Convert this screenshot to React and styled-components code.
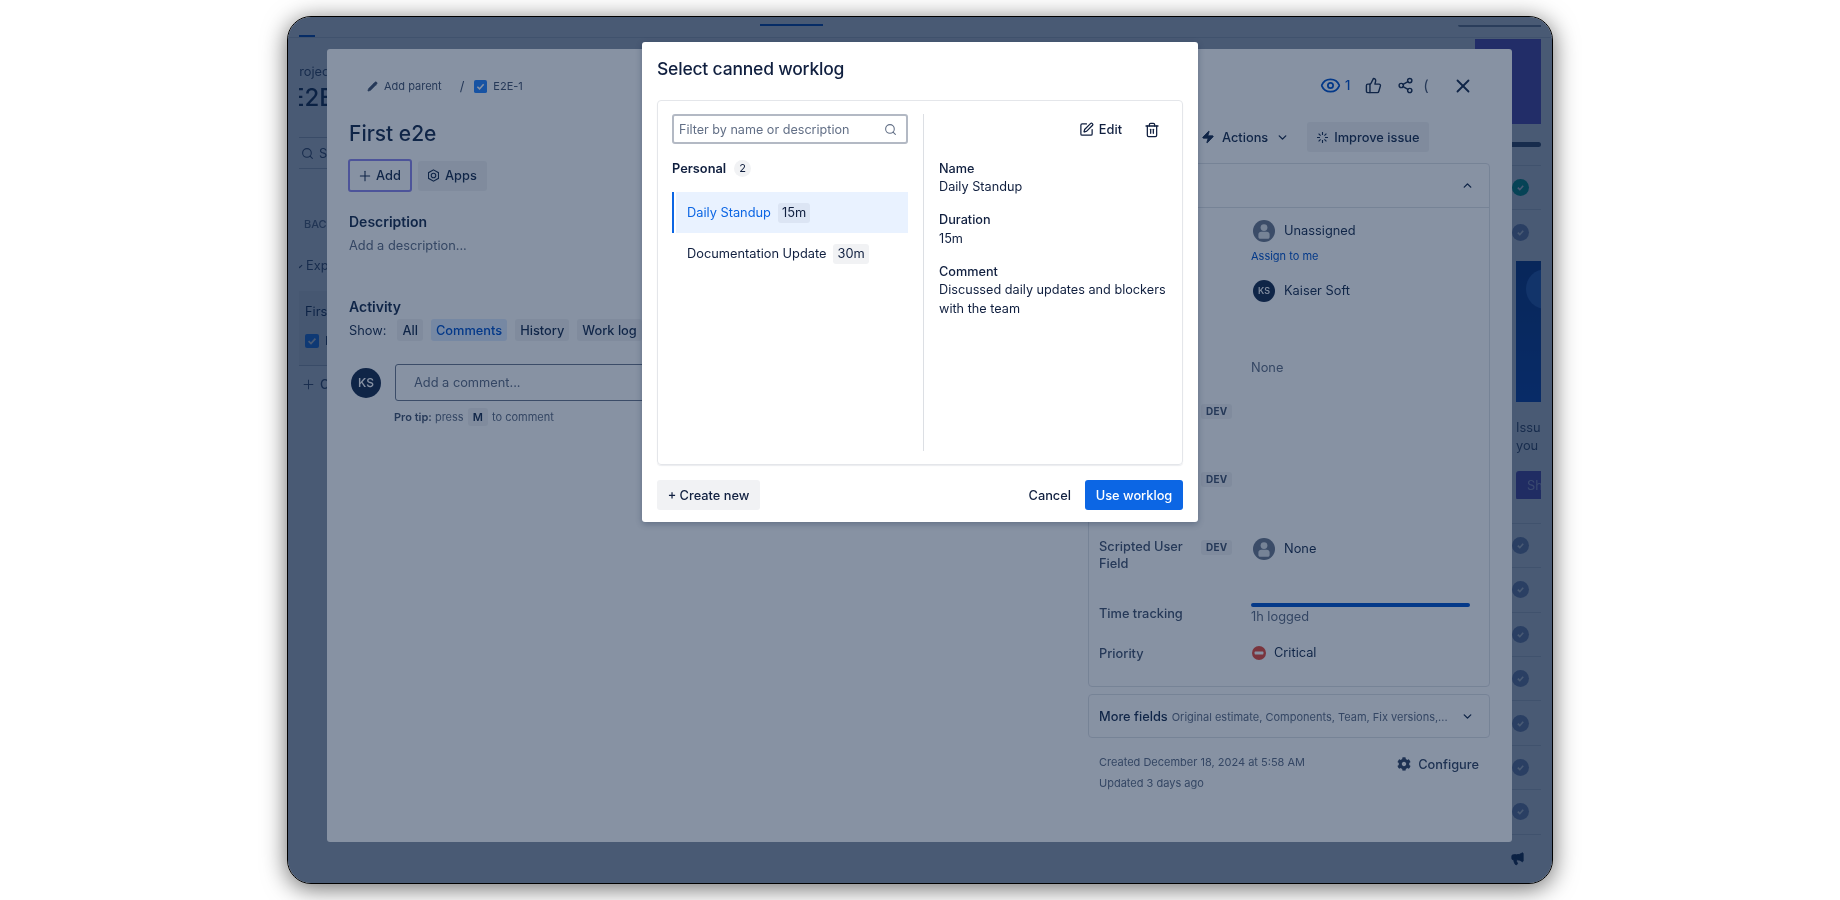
import React from "react";
import styled, { createGlobalStyle } from "styled-components";
import { FaCog } from "react-icons/fa";
import {
  ChevronDown,
  ChevronUp,
  Eye,
  Megaphone,
  Pencil,
  Plus,
  Search,
  Share2,
  SquarePen,
  ThumbsUp,
  Trash2,
  X,
  Zap,
} from "lucide-react";

const GlobalStyle = createGlobalStyle`
  html, body {
    margin: 0;
    background: #fff;
  }
  body {
    font-family: Inter, "Noto Sans", sans-serif;
    color: #172b4d;
  }
  * {
    box-sizing: border-box;
  }
`;

const CHECK_ROWS_TOP = [1, 2];
const CHECK_ROWS_BOTTOM = [1, 2, 3, 4, 5, 6, 7];

function App() {
  return (
    <Page>
      <GlobalStyle />
      <Frame>
        <TopBar>
          <TabDash />
          <NavUnderline />
          <SearchLine />
        </TopBar>
        <Board>
          <LeftRail>
            <Crumb>Projects</Crumb>
            <ProjectName>E2E</ProjectName>
            <RailSearch>
              <Search size={13} strokeWidth={2} />
              <span>Search</span>
            </RailSearch>
            <SectionLabel>BACKLOG</SectionLabel>
            <Expander>
              <ChevronDown size={9} strokeWidth={3} />
              <span>Expand</span>
            </Expander>
            <BoardCard>
              <CardTitle>First e2e</CardTitle>
              <CardKey>
                <TaskCheck size={14} />
                <span>E2E-1</span>
              </CardKey>
            </BoardCard>
            <CreateIssue>
              <Plus size={15} strokeWidth={1.5} />
              <span>Create</span>
            </CreateIssue>
          </LeftRail>
          <RightRail>
            <Banner />
            <RailBar />
            {CHECK_ROWS_TOP.map((n) => (
              <CheckRow key={n}>
                <CheckDot $done={n === 1}>
                  <CheckMark />
                </CheckDot>
              </CheckRow>
            ))}
            <Promo>
              <PromoArt>
                <PromoBlob />
              </PromoArt>
              <PromoText>Issues you</PromoText>
              <PromoButton>Show</PromoButton>
            </Promo>
            {CHECK_ROWS_BOTTOM.map((n) => (
              <CheckRow key={n}>
                <CheckDot>
                  <CheckMark />
                </CheckDot>
              </CheckRow>
            ))}
            <Feedback>
              <Megaphone size={15} fill="currentColor" strokeWidth={1.5} />
            </Feedback>
          </RightRail>
        </Board>
        <Scrim />
        <IssuePanel>
          <MainColumn>
            <Breadcrumbs>
              <Pencil size={11} fill="currentColor" strokeWidth={1.5} />
              <span>Add parent</span>
              <Slash>/</Slash>
              <TaskCheck size={13} />
              <span>E2E-1</span>
            </Breadcrumbs>
            <IssueTitle>First e2e</IssueTitle>
            <ButtonRow>
              <GhostButton $focused>
                <Plus size={16} strokeWidth={1.6} />
                Add
              </GhostButton>
              <GhostButton>
                <AppsIcon />
                Apps
              </GhostButton>
            </ButtonRow>
            <SectionTitle>Description</SectionTitle>
            <Placeholder>Add a description...</Placeholder>
            <ActivityTitle>Activity</ActivityTitle>
            <FilterRow>
              <span>Show:</span>
              <FilterChip>All</FilterChip>
              <FilterChip $active>Comments</FilterChip>
              <FilterChip>History</FilterChip>
              <FilterChip>Work log</FilterChip>
            </FilterRow>
            <CommentRow>
              <Avatar $size={30} $font={12}>KS</Avatar>
              <CommentBox>Add a comment...</CommentBox>
            </CommentRow>
            <ProTip>
              <strong>Pro tip:</strong> press <Kbd>M</Kbd> to comment
            </ProTip>
          </MainColumn>
          <SideColumn>
            <TopIcons>
              <WatchCount>
                <Eye size={21} strokeWidth={2} />
                <span>1</span>
              </WatchCount>
              <ThumbsUp size={17} strokeWidth={2} />
              <Share2 size={17} strokeWidth={2} />
              <ClippedParen>(</ClippedParen>
              <CloseIcon>
                <X size={22} strokeWidth={2} />
              </CloseIcon>
            </TopIcons>
            <ActionRow>
              <ActionsButton>
                <Zap size={14} fill="currentColor" strokeWidth={1.5} />
                <span>Actions</span>
                <ChevronDown size={13} strokeWidth={2.6} />
              </ActionsButton>
              <ImproveButton>
                <SparkIcon />
                Improve issue
              </ImproveButton>
            </ActionRow>
            <DetailsCard>
              <DetailsHeader>
                <ChevronUp size={13} strokeWidth={2.6} />
              </DetailsHeader>
              <FieldList>
                <FieldRow $h={60}>
                  <FieldLabel />
                  <FieldBadge />
                  <FieldValue>
                    <PersonLine>
                      <PersonIcon />
                      Unassigned
                    </PersonLine>
                    <AssignLink>Assign to me</AssignLink>
                  </FieldValue>
                </FieldRow>
                <FieldRow $h={77}>
                  <FieldLabel />
                  <FieldBadge />
                  <FieldValue>
                    <PersonLine>
                      <Avatar $size={22} $font={9}>KS</Avatar>
                      Kaiser Soft
                    </PersonLine>
                  </FieldValue>
                </FieldRow>
                <FieldRow $h={43}>
                  <FieldLabel />
                  <FieldBadge />
                  <MutedValue>None</MutedValue>
                </FieldRow>
                <FieldRow $h={68}>
                  <FieldLabel />
                  <FieldBadge>
                    <DevTag>DEV</DevTag>
                  </FieldBadge>
                  <FieldValue />
                </FieldRow>
                <FieldRow $h={68}>
                  <FieldLabel />
                  <FieldBadge>
                    <DevTag>DEV</DevTag>
                  </FieldBadge>
                  <FieldValue />
                </FieldRow>
                <FieldRow $h={67}>
                  <FieldLabel>Scripted User Field</FieldLabel>
                  <FieldBadge>
                    <DevTag>DEV</DevTag>
                  </FieldBadge>
                  <ScriptedValue>
                    <PersonLine>
                      <PersonIcon />
                      None
                    </PersonLine>
                  </ScriptedValue>
                </FieldRow>
                <FieldRow $h={40}>
                  <FieldLabel>Time tracking</FieldLabel>
                  <FieldBadge />
                  <FieldValue>
                    <TimeBar />
                    <TimeText>1h logged</TimeText>
                  </FieldValue>
                </FieldRow>
                <FieldRow $h={44}>
                  <FieldLabel>Priority</FieldLabel>
                  <FieldBadge />
                  <PriorityValue>
                    <CriticalIcon />
                    Critical
                  </PriorityValue>
                </FieldRow>
              </FieldList>
            </DetailsCard>
            <MoreFields>
              <MoreText>
                <strong>More fields</strong>
                <small>Original estimate, Components, Team, Fix versions,...</small>
              </MoreText>
              <ChevronDown size={13} strokeWidth={2.6} />
            </MoreFields>
            <MetaRow>
              <MetaDates>
                <span>Created December 18, 2024 at 5:58 AM</span>
                <span>Updated 3 days ago</span>
              </MetaDates>
              <ConfigureLink>
                <FaCog size={14} />
                Configure
              </ConfigureLink>
            </MetaRow>
          </SideColumn>
        </IssuePanel>
        <Scrim />
        <Modal>
          <ModalTitle>Select canned worklog</ModalTitle>
          <PickerBox>
            <PickerList>
              <FilterInput>
                <span>Filter by name or description</span>
                <Search size={13} strokeWidth={2} />
              </FilterInput>
              <GroupHeading>
                Personal
                <CountPill>2</CountPill>
              </GroupHeading>
              <WorklogRow $selected>
                Daily Standup
                <DurationChip>15m</DurationChip>
              </WorklogRow>
              <WorklogRow>
                Documentation Update
                <DurationChip>30m</DurationChip>
              </WorklogRow>
            </PickerList>
            <PickerDetail>
              <DetailActions>
                <EditAction>
                  <SquarePen size={15} strokeWidth={2} />
                  Edit
                </EditAction>
                <Trash2 size={16} strokeWidth={1.9} />
              </DetailActions>
              <DetailField>
                <strong>Name</strong>
                <span>Daily Standup</span>
              </DetailField>
              <DetailField>
                <strong>Duration</strong>
                <span>15m</span>
              </DetailField>
              <DetailField>
                <strong>Comment</strong>
                <span>Discussed daily updates and blockers with the team</span>
              </DetailField>
            </PickerDetail>
          </PickerBox>
          <ModalFooter>
            <CreateButton>+ Create new</CreateButton>
            <FooterActions>
              <CancelButton>Cancel</CancelButton>
              <PrimaryButton>Use worklog</PrimaryButton>
            </FooterActions>
          </ModalFooter>
        </Modal>
      </Frame>
    </Page>
  );
}

function TaskCheck({ size }) {
  return (
    <svg width={size} height={size} viewBox="0 0 14 14">
      <rect width="14" height="14" rx="2" fill="#2684ff" />
      <path d="M3.6 7.2l2.4 2.4 4.4-5" fill="none" stroke="#fff" strokeWidth="1.7" />
    </svg>
  );
}

function CheckMark() {
  return (
    <svg width="9" height="9" viewBox="0 0 10 10">
      <path d="M2 5.2l2.2 2.2L8 3" fill="none" stroke="#fff" strokeWidth="1.8" />
    </svg>
  );
}

function AppsIcon() {
  return (
    <svg width="13" height="13" viewBox="0 0 12 12" fill="none" stroke="currentColor">
      <path d="M6 .8l4.6 2.6v5.2L6 11.2 1.4 8.6V3.4z" strokeWidth="1" />
      <circle cx="6" cy="6" r="2.1" strokeWidth="1" />
    </svg>
  );
}

function SparkIcon() {
  return (
    <svg width="13" height="13" viewBox="0 0 13 13" stroke="currentColor" strokeWidth="1.1">
      <path d="M6.5 1v3M6.5 9v3M1 6.5h3M9 6.5h3M2.6 2.6l2 2M8.4 8.4l2 2M10.4 2.6l-2 2M4.6 8.4l-2 2" />
    </svg>
  );
}

function PersonIcon() {
  return (
    <svg width="22" height="22" viewBox="0 0 22 22">
      <circle cx="11" cy="11" r="11" fill="#6b778c" />
      <circle cx="11" cy="7.6" r="3.4" fill="#dfe1e6" />
      <path d="M5.4 14.4c0-1.6 1.2-2.6 2.8-2.6h5.6c1.6 0 2.8 1 2.8 2.6V17c0 1-.8 1.8-1.8 1.8H7.2c-1 0-1.8-.8-1.8-1.8z" fill="#dfe1e6" />
    </svg>
  );
}

function CriticalIcon() {
  return (
    <svg width="14" height="14" viewBox="0 0 14 14">
      <circle cx="7" cy="7" r="7" fill="#e5493a" />
      <rect x="2.6" y="5.6" width="8.8" height="2.8" rx=".6" fill="#fff" />
    </svg>
  );
}

const Page = styled.div`
  min-height: 900px;
  padding-top: 16px;
  display: flex;
  justify-content: center;
  align-items: flex-start;
  overflow: hidden;
`;

const Frame = styled.div`
  position: relative;
  width: 1266px;
  height: 868px;
  display: flex;
  flex-direction: column;
  background: #fff;
  border: 1.5px solid #000;
  border-radius: 24px;
  overflow: hidden;
  box-shadow: 0 4px 24px rgba(0, 0, 0, 0.6);
  filter: blur(0.4px);
`;

/* the overlay that dims everything under a dialog */
const Scrim = styled.div`
  position: absolute;
  inset: 0;
  background: rgba(9, 30, 66, 0.485);
`;

/* --- page under the dialogs, only its edges show --- */

const TopBar = styled.div`
  flex: 0 0 21px;
  display: flex;
  justify-content: space-between;
  padding: 0 11px;
  border-bottom: 1px solid #dfe1e6;
`;

const TabDash = styled.div`
  align-self: flex-end;
  width: 16px;
  height: 2px;
  background: #0052cc;
`;

const NavUnderline = styled.div`
  align-self: flex-start;
  margin: 7px 0 0 -190px;
  width: 63px;
  height: 2px;
  background: #0052cc;
`;

const SearchLine = styled.div`
  align-self: flex-start;
  margin-top: 8px;
  width: 83px;
  height: 2px;
  border-radius: 0 0 0 4px;
  background: #8993a4;
`;

const Board = styled.div`
  flex: 1;
  min-height: 0;
  display: flex;
  justify-content: space-between;
  padding: 0 11px;
`;

const LeftRail = styled.div`
  width: 29px;
  overflow: hidden;
  white-space: nowrap;
  display: flex;
  flex-direction: column;
  align-items: flex-start;

  svg {
    flex: none;
  }
`;

const Crumb = styled.div`
  margin: 25px 0 0 -8px;
  font-size: 12.8px;
  line-height: 18px;
  color: #42526e;
`;

const ProjectName = styled.div`
  margin: 2px 0 0 -9px;
  font-size: 24px;
  line-height: 30px;
  font-weight: 500;
  color: #172b4d;
`;

const RailSearch = styled.div`
  align-self: stretch;
  margin-top: 24px;
  padding-left: 2px;
  height: 32px;
  display: flex;
  align-items: center;
  gap: 5px;
  font-size: 12.8px;
  color: #42526e;
  border-top: 1px solid #c1c7d0;
  border-bottom: 1px solid #c1c7d0;
`;

const SectionLabel = styled.div`
  margin: 47px 0 0 5px;
  font-size: 11px;
  line-height: 16px;
  font-weight: 500;
  color: #6b778c;
`;

const Expander = styled.div`
  margin: 25px 0 0 -4px;
  display: flex;
  align-items: center;
  gap: 2px;
  font-size: 12.8px;
  line-height: 18px;
  color: #42526e;
`;

const BoardCard = styled.div`
  align-self: stretch;
  margin-top: 16px;
  height: 75px;
  padding: 12px 6px;
  background: #f4f5f7;
  border-bottom: 1px solid #c1c7d0;
`;

const CardTitle = styled.div`
  font-size: 12.8px;
  line-height: 18px;
  color: #172b4d;
`;

const CardKey = styled.div`
  margin-top: 12px;
  display: flex;
  align-items: center;
  gap: 6px;
  font-size: 12px;
`;

const CreateIssue = styled.div`
  margin: 11px 0 0 2px;
  display: flex;
  align-items: center;
  gap: 4px;
  font-size: 12.8px;
  font-weight: 500;
  color: #42526e;
`;

const RightRail = styled.div`
  width: 66px;
  padding-bottom: 8px;
  display: flex;
  flex-direction: column;
`;

const Banner = styled.div`
  height: 85px;
  margin-top: 1px;
  background: #6d57d5;
`;

const RailBar = styled.div`
  height: 5px;
  margin: 18px 0;
  border-radius: 0 3px 3px 0;
  background: #42526e;
`;

const CheckRow = styled.div`
  flex: 0 0 44.4px;
  display: flex;
  align-items: center;
  padding-left: 37px;
  border-top: 1px solid #dfe1e6;
`;

const CheckDot = styled.div`
  width: 17px;
  height: 17px;
  border-radius: 50%;
  display: flex;
  align-items: center;
  justify-content: center;
  background: ${(p) => (p.$done ? "#00a88f" : "#8a9bc0")};
`;

const Promo = styled.div`
  flex: none;
  margin: 7px 0 24px 41px;
  height: 238px;
  overflow: hidden;
`;

const PromoArt = styled.div`
  position: relative;
  height: 141px;
  overflow: hidden;
  background: linear-gradient(180deg, #0b3f9f 0%, #0a4fd0 100%);
`;

const PromoBlob = styled.div`
  position: absolute;
  top: 8px;
  left: 10px;
  width: 40px;
  height: 40px;
  border-radius: 50%;
  background: #2f6fdc;
`;

const PromoText = styled.div`
  margin-top: 17px;
  width: 42px;
  font-size: 12.8px;
  line-height: 18px;
  color: #42526e;
`;

const PromoButton = styled.div`
  margin-top: 16px;
  width: 70px;
  height: 29px;
  padding-left: 11px;
  border-radius: 3px;
  display: flex;
  align-items: center;
  font-size: 12.8px;
  color: #c4bff0;
  background: #6554c0;
`;

const Feedback = styled.div`
  flex: 1;
  display: flex;
  align-items: center;
  justify-content: flex-end;
  padding: 8px 16px 0 0;
  color: #172b4d;
  border-top: 1px solid #dfe1e6;
`;

/* --- issue dialog --- */

const IssuePanel = styled.div`
  position: absolute;
  top: 32px;
  left: 39px;
  width: 1185px;
  height: 793px;
  display: flex;
  border-radius: 3px;
  background: #fff;
`;

const MainColumn = styled.div`
  flex: 1;
  min-width: 0;
  overflow: hidden;
  padding: 28px 22px 0;
`;

const Breadcrumbs = styled.div`
  margin-left: 18px;
  height: 18px;
  display: flex;
  align-items: center;
  gap: 6px;
  font-size: 11px;
  color: #42526e;
`;

const Slash = styled.span`
  margin: 0 4px 0 12px;
  font-size: 13px;
`;

const IssueTitle = styled.h1`
  margin: 25px 0 0;
  font-size: 21px;
  line-height: 28px;
  font-weight: 500;
  color: #172b4d;
`;

const ButtonRow = styled.div`
  margin: 11px 0 0 -1px;
  height: 33px;
  display: flex;
  align-items: center;
  gap: 6px;
`;

const GhostButton = styled.div`
  height: ${(p) => (p.$focused ? "33px" : "30px")};
  padding: 0 ${(p) => (p.$focused ? "7px" : "9px")};
  width: ${(p) => (p.$focused ? "64px" : "69px")};
  display: flex;
  align-items: center;
  gap: ${(p) => (p.$focused ? "3px" : "5px")};
  font-size: 12.8px;
  font-weight: 500;
  color: #172b4d;
  border-radius: 3px;
  background: ${(p) => (p.$focused ? "transparent" : "rgba(9, 30, 66, 0.06)")};
  border: ${(p) => (p.$focused ? "2px solid #8f86ee" : "none")};
`;

const SectionTitle = styled.h2`
  margin: 20px 0 0;
  font-size: 14px;
  line-height: 20px;
  font-weight: 600;
  color: #172b4d;
`;

const Placeholder = styled.div`
  margin-top: 5px;
  font-size: 12.8px;
  line-height: 18px;
  color: #5e6c84;
`;

const ActivityTitle = styled(SectionTitle)`
  margin-top: 42px;
`;

const FilterRow = styled.div`
  margin-top: 2px;
  height: 22px;
  display: flex;
  align-items: center;
  gap: 8px;
  font-size: 12.8px;
  color: #172b4d;

  span {
    margin-right: 3px;
  }
`;

const FilterChip = styled.div`
  height: 22px;
  padding: 0 5px;
  display: flex;
  align-items: center;
  font-weight: 500;
  white-space: nowrap;
  border-radius: 3px;
  color: ${(p) => (p.$active ? "#0052cc" : "#172b4d")};
  background: ${(p) => (p.$active ? "#deebff" : "rgba(9, 30, 66, 0.06)")};
`;

const CommentRow = styled.div`
  margin-top: 23px;
  display: flex;
  align-items: center;
  gap: 14px;
  padding-left: 2px;
`;

const Avatar = styled.div`
  flex: none;
  width: ${(p) => p.$size}px;
  height: ${(p) => p.$size}px;
  border-radius: 50%;
  display: flex;
  align-items: center;
  justify-content: center;
  font-size: ${(p) => p.$font}px;
  font-weight: 500;
  color: #fff;
  background: #172b4d;
`;

const CommentBox = styled.div`
  flex: 1;
  height: 37px;
  padding-left: 18px;
  display: flex;
  align-items: center;
  font-size: 12.8px;
  color: #5e6c84;
  border: 1.5px solid #6b778c;
  border-radius: 3px;
`;

const ProTip = styled.div`
  margin: 7px 0 0 45px;
  font-size: 11px;
  line-height: 18px;
  color: #5e6c84;

  strong {
    font-weight: 600;
    color: #42526e;
  }
`;

const Kbd = styled.span`
  display: inline-block;
  margin: 0 1px;
  padding: 0 5px;
  font-weight: 600;
  border-radius: 3px;
  color: #172b4d;
  background: rgba(9, 30, 66, 0.06);
`;

const SideColumn = styled.div`
  flex: 0 0 424px;
  padding: 26px 22px 0 0;
`;

const TopIcons = styled.div`
  height: 21px;
  display: flex;
  align-items: center;
  gap: 15px;
  padding-left: 232px;
  color: #172b4d;
`;

const WatchCount = styled.div`
  display: flex;
  align-items: center;
  gap: 4px;
  font-size: 12.8px;
  font-weight: 500;
  color: #0052cc;
`;

const ClippedParen = styled.span`
  margin-left: -6px;
  font-size: 15px;
  color: #42526e;
`;

const CloseIcon = styled.div`
  margin-left: 8px;
  display: flex;
`;

const ActionRow = styled.div`
  margin-top: 26px;
  height: 30px;
  display: flex;
  align-items: center;
  gap: 16px;
  padding-left: 113px;
`;

const ActionsButton = styled.div`
  display: flex;
  align-items: center;
  gap: 7px;
  font-size: 12.8px;
  font-weight: 500;
  color: #172b4d;

  span {
    margin-right: 1px;
  }
`;

const ImproveButton = styled.div`
  margin-left: 2px;
  width: 122px;
  height: 30px;
  padding-left: 9px;
  display: flex;
  align-items: center;
  gap: 5px;
  font-size: 12.8px;
  font-weight: 500;
  color: #172b4d;
  border-radius: 3px;
  background: rgba(9, 30, 66, 0.06);
`;

const DetailsCard = styled.div`
  margin-top: 11px;
  height: 524px;
  border: 1px solid #dfe1e6;
  border-radius: 4px;
  color: #172b4d;
`;

const DetailsHeader = styled.div`
  height: 44px;
  display: flex;
  align-items: center;
  justify-content: flex-end;
  padding-right: 15px;
  border-bottom: 1px solid #dfe1e6;
`;

const FieldList = styled.div`
  padding: 12px 0 0 10px;
`;

const FieldRow = styled.div`
  height: ${(p) => p.$h}px;
  display: grid;
  grid-template-columns: 102px 50px 1fr;
`;

const FieldLabel = styled.div`
  font-size: 12.8px;
  line-height: 17px;
  padding-top: 2px;
  font-weight: 500;
  color: #42526e;
`;

const FieldBadge = styled.div`
  line-height: 18px;
`;

const DevTag = styled.span`
  display: inline-block;
  padding: 0 5px;
  height: 15px;
  line-height: 15px;
  font-size: 10px;
  font-weight: 700;
  letter-spacing: 0.2px;
  border-radius: 3px;
  color: #42526e;
  background: rgba(9, 30, 66, 0.06);
`;

const FieldValue = styled.div`
  font-size: 12.8px;
  line-height: 22px;
`;

const MutedValue = styled(FieldValue)`
  color: #5e6c84;
`;

const ScriptedValue = styled(FieldValue)`
  margin-top: 2px;
`;

const PersonLine = styled.div`
  display: flex;
  align-items: center;
  gap: 9px;
  margin-left: 2px;
`;

const AssignLink = styled.div`
  margin-top: 6px;
  font-size: 11px;
  line-height: 16px;
  color: #0052cc;
`;

const TimeBar = styled.div`
  width: 219px;
  height: 3.5px;
  border-radius: 2px;
  background: #0052cc;
`;

const TimeText = styled.div`
  line-height: 18px;
  margin-top: 1px;
  color: #5e6c84;
`;

const PriorityValue = styled(FieldValue)`
  display: flex;
  align-items: center;
  align-self: flex-start;
  gap: 8px;
  margin: -1px 0 0 1px;
`;

const MoreFields = styled.div`
  margin-top: 7px;
  height: 44px;
  padding: 0 15px 0 10px;
  display: flex;
  align-items: center;
  justify-content: space-between;
  color: #172b4d;
  border: 1px solid #dfe1e6;
  border-radius: 4px;
`;

const MoreText = styled.div`
  display: flex;
  align-items: baseline;
  gap: 4px;

  strong {
    font-size: 12.8px;
    font-weight: 500;
  }
  small {
    font-size: 11px;
    color: #5e6c84;
  }
`;

const MetaRow = styled.div`
  margin-top: 16px;
  padding: 0 11px;
  display: flex;
  justify-content: space-between;
`;

const MetaDates = styled.div`
  display: flex;
  flex-direction: column;
  gap: 4px;
  font-size: 11px;
  line-height: 17px;
  color: #5e6c84;
`;

const ConfigureLink = styled.div`
  height: 20px;
  display: flex;
  align-items: center;
  gap: 7px;
  font-size: 12.8px;
  font-weight: 500;
  color: #344563;
`;

/* --- canned worklog picker --- */

const Modal = styled.div`
  position: absolute;
  top: 25px;
  left: 354px;
  width: 556px;
  height: 480px;
  padding: 14px 15px 12px;
  display: flex;
  flex-direction: column;
  border-radius: 3px;
  color: #101f3f;
  background: #fff;
  box-shadow: 0 2px 6px rgba(9, 30, 66, 0.3);
`;

const ModalTitle = styled.h3`
  margin: 0;
  font-size: 17.5px;
  line-height: 26px;
  font-weight: 500;
  letter-spacing: -0.2px;
`;

const PickerBox = styled.div`
  margin-top: 18px;
  height: 365px;
  padding: 13px 0;
  display: grid;
  grid-template-columns: 265px 1fr;
  border: 1px solid #e4e6ea;
  border-radius: 4px;
  box-shadow: 0 1px 1px rgba(9, 30, 66, 0.08);
`;

const PickerList = styled.div`
  padding: 0 15px 0 14px;
`;

const FilterInput = styled.div`
  height: 30px;
  padding: 0 9px 0 5px;
  display: flex;
  align-items: center;
  justify-content: space-between;
  font-size: 12.6px;
  color: #626f86;
  border: 2px solid #b3b9c4;
  border-radius: 3px;
`;

const GroupHeading = styled.div`
  margin: 14px 0;
  height: 20px;
  display: flex;
  align-items: center;
  gap: 8px;
  font-size: 12.8px;
  font-weight: 600;
`;

const CountPill = styled.span`
  min-width: 17px;
  height: 17px;
  display: flex;
  align-items: center;
  justify-content: center;
  font-size: 11px;
  font-weight: 400;
  border-radius: 9px;
  background: #f1f2f4;
`;

const WorklogRow = styled.div`
  height: 41px;
  padding-left: 15px;
  display: flex;
  align-items: center;
  gap: 7px;
  font-size: 12.8px;
  color: ${(p) => (p.$selected ? "#0c66e4" : "inherit")};
  background: ${(p) => (p.$selected ? "#e9f2ff" : "transparent")};
  box-shadow: ${(p) => (p.$selected ? "inset 2px 0 0 #0c66e4, inset 4px 0 0 #fff" : "none")};
`;

const DurationChip = styled.span`
  height: 20px;
  padding: 0 4px;
  display: flex;
  align-items: center;
  border-radius: 3px;
  color: #101f3f;
  background: rgba(9, 30, 66, 0.06);
`;

const PickerDetail = styled.div`
  padding: 0 10px 0 15px;
  border-left: 1px solid #dcdfe4;
`;

const DetailActions = styled.div`
  height: 31px;
  padding-right: 12px;
  display: flex;
  align-items: center;
  justify-content: flex-end;
  gap: 22px;
`;

const EditAction = styled.div`
  display: flex;
  align-items: center;
  gap: 5px;
  font-size: 12.8px;
  font-weight: 500;
`;

const DetailField = styled.div`
  margin-top: 14.5px;
  display: flex;
  flex-direction: column;
  font-size: 12.7px;
  line-height: 18.5px;

  strong {
    font-weight: 500;
  }
`;

const ModalFooter = styled.div`
  margin-top: 15px;
  display: flex;
  justify-content: space-between;
`;

const CreateButton = styled.div`
  width: 103px;
  height: 30px;
  display: flex;
  align-items: center;
  justify-content: center;
  font-size: 12.8px;
  font-weight: 500;
  border-radius: 3px;
  background: #f1f2f4;
`;

const FooterActions = styled.div`
  display: flex;
  align-items: center;
  gap: 14px;
`;

const CancelButton = styled.div`
  font-size: 12.8px;
  font-weight: 500;
`;

const PrimaryButton = styled.div`
  width: 98px;
  height: 30px;
  display: flex;
  align-items: center;
  justify-content: center;
  font-size: 12.8px;
  font-weight: 500;
  color: #fff;
  border-radius: 3px;
  background: #0c66e4;
`;

export default App;
